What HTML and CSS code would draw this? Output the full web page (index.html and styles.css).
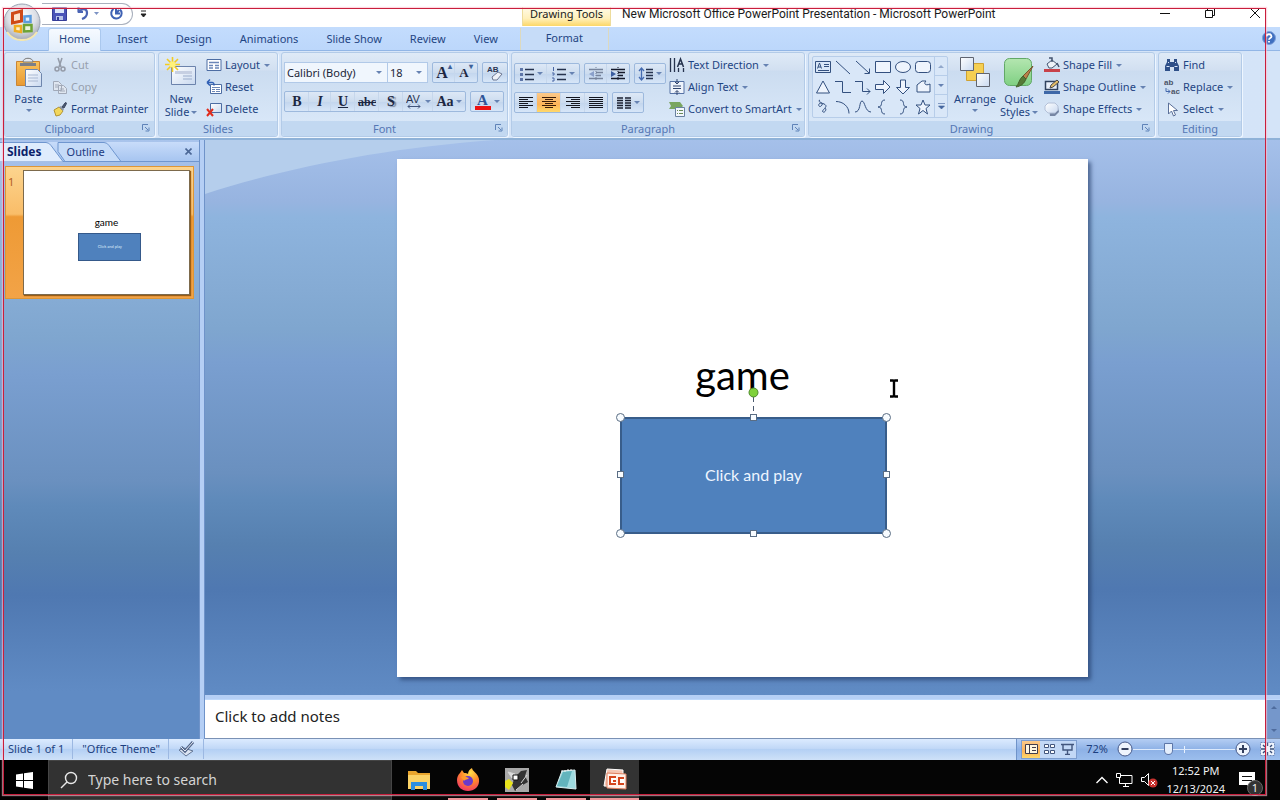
FILE: index.html
```html
<!DOCTYPE html>
<html lang="en">
<head>
<meta charset="utf-8">
<title>New Microsoft Office PowerPoint Presentation - Microsoft PowerPoint</title>
<link rel="stylesheet" href="styles.css">
</head>
<body>
<svg class="defs" aria-hidden="true">
  <defs>
    <linearGradient id="gPaper" x1="0" y1="0" x2="1" y2="1"><stop offset="0" stop-color="#fff"/><stop offset="1" stop-color="#c9d9f0"/></linearGradient>
    <linearGradient id="gClip" x1="0" y1="0" x2="0" y2="1"><stop offset="0" stop-color="#f9c25c"/><stop offset="1" stop-color="#e99a33"/></linearGradient>
    <linearGradient id="gGreen" x1="0" y1="0" x2="0" y2="1"><stop offset="0" stop-color="#b4e6b0"/><stop offset="1" stop-color="#7fd083"/></linearGradient>
    <radialGradient id="gOrb" cx=".5" cy=".35" r=".65"><stop offset="0" stop-color="#fff"/><stop offset=".6" stop-color="#dcdfe6"/><stop offset="1" stop-color="#a4a9b4"/></radialGradient>
    <radialGradient id="gFox" cx=".6" cy=".2" r=".9"><stop offset="0" stop-color="#ffe04a"/><stop offset=".45" stop-color="#ff8a2a"/><stop offset="1" stop-color="#ee2a6e"/></radialGradient>
    <symbol id="launch" viewBox="0 0 8 8"><path d="M.5 6V.5H6M3 3l3 3M7 3.500V7H3.500" fill="none" stroke="#5f83b8"/></symbol>
  </defs>
</svg>
<div class="desktop">
  <header class="titlebar">
    <button class="orb" aria-label="Office Button">
      <svg width="38" height="38" viewBox="0 0 38 38"><circle cx="19" cy="19" r="18" fill="url(#gOrb)" stroke="#9aa3b3"/><path d="M4 29a18 18 0 0 0 30 0" fill="none" stroke="#f4e7b0" stroke-width="2"/><path d="M9.500 10.500l9-2.500v10l-9 2z" fill="#fbe3cf" stroke="#cf4a17" stroke-width="3"/><path d="M21.500 13.500l6-.5v6h-6z" fill="#e6f0fb" stroke="#5b9bdd" stroke-width="2.500"/><path d="M12 23h6v6l-6-1z" fill="#fdf2cf" stroke="#f0ac21" stroke-width="2.500"/><path d="M21 22h7.500v6l-7.500.5z" fill="#eaf4dc" stroke="#6da335" stroke-width="2.500"/></svg>
    </button>
    <div class="qat">
      <button aria-label="Save"><svg width="15" height="15" viewBox="0 0 15 15"><path d="M.5 1.500h14v13h-14z" fill="#4a54b8" stroke="#343c98"/><path d="M3 2h9v5H3z" fill="#dbe6fa"/><path d="M4 10h7v4H4z" fill="#b9c4e8"/><path d="M5 11h2v3H5z" fill="#343c98"/></svg></button>
      <button aria-label="Undo"><svg width="22" height="15" viewBox="0 0 22 15"><path d="M1 6h5M1.500 6.500V1M2 6c3-4 8-4 8 1 0 3-2 5-5 6" fill="none" stroke="#4a64b4" stroke-width="2.200"/><path d="M17 6h5l-2.500 3z" fill="#7d93c4"/></svg></button>
      <button aria-label="Repeat"><svg width="15" height="15" viewBox="0 0 15 15"><path d="M4.500 3A5.200 5.200 0 1 0 11 3.500M7 8V2M6 7.500h5M7 7.500l3-3.500" fill="none" stroke="#3f62b4" stroke-width="2"/></svg></button>
    </div>
    <button class="qat-more" aria-label="Customize Quick Access Toolbar"><svg width="7" height="8" viewBox="0 0 7 8"><path d="M1 1h5M1 4h5L3.500 7z" fill="#222" stroke="#222"/></svg></button>
    <div class="context-title">Drawing Tools</div>
    <h1 class="title">New Microsoft Office PowerPoint Presentation - Microsoft PowerPoint</h1>
    <div class="window-buttons">
      <button aria-label="Minimize"><svg width="12" height="12" viewBox="0 0 12 12"><path d="M1 6.500h10" stroke="#111"/></svg></button>
      <button aria-label="Restore"><svg width="12" height="12" viewBox="0 0 12 12"><path d="M1.500 3.500h7v7h-7zM3.500 3V1.500h7v7H9" fill="none" stroke="#111"/></svg></button>
      <button aria-label="Close"><svg width="12" height="12" viewBox="0 0 12 12"><path d="M1 1l10 10M11 1L1 11" stroke="#111"/></svg></button>
    </div>
  </header>

  <nav class="tabs">
    <button class="tab tab-on">Home</button>
    <button class="tab">Insert</button>
    <button class="tab">Design</button>
    <button class="tab">Animations</button>
    <button class="tab">Slide Show</button>
    <button class="tab">Review</button>
    <button class="tab">View</button>
    <button class="tab tab-context">Format</button>
    <button class="help" aria-label="Help"><svg width="14" height="14" viewBox="0 0 14 14"><circle cx="7" cy="7" r="6.500" fill="#3f6fc0" stroke="#7d9fd8"/><path d="M4.500 5.500c0-3 5-3 5 0 0 1.500-2.500 1.500-2.500 3.200M7 10v1.500" fill="none" stroke="#fff" stroke-width="1.800"/></svg></button>
  </nav>

  <section class="ribbon">
    <div class="group g-clipboard">
      <div class="group-body">
        <button class="big"><svg width="28" height="31" viewBox="0 0 28 31"><path d="M1.500 4.500h23v24h-23z" fill="url(#gClip)" stroke="#c98535"/><path d="M5 6h16v3H5z" fill="#7b7f88"/><path d="M8 5c0-5 10-5 10 0z" fill="#e6e9ee" stroke="#777"/><path d="M10.500 12.500h12l4 4v13h-16z" fill="url(#gPaper)" stroke="#6e86ad"/><path d="M13 18h10M13 21h10M13 24h10" stroke="#a9b8d2"/></svg><span>Paste</span><i class="caret"></i></button>
        <div class="stack">
          <button class="small dim"><svg width="16" height="16" viewBox="0 0 16 16"><path d="M6 1l3 9M10 1L7 10" stroke="#949ba8" stroke-width="1.500"/><circle cx="5" cy="12" r="2" fill="none" stroke="#949ba8" stroke-width="1.500"/><circle cx="11" cy="12" r="2" fill="none" stroke="#949ba8" stroke-width="1.500"/></svg>Cut</button>
          <button class="small dim"><svg width="16" height="16" viewBox="0 0 16 16"><path d="M1.500 2.500h5l3 3v6h-8zM6.500 6.500h5l3 3v5h-8z" fill="#dfe6f0" stroke="#a1a9b8"/><path d="M3 6h4M3 8h3M8 10h4M8 12h5" stroke="#a1a9b8"/></svg>Copy</button>
          <button class="small"><svg width="16" height="16" viewBox="0 0 16 16"><path d="M2 9l5-3 4 4-3 4-4 1z" fill="#f2d75c" stroke="#b39432"/><path d="M7 6l2-1 3 3-1 2z" fill="#8f98aa"/><path d="M10 6l3-4 1-.5.500 1L12 7z" fill="#4a5874" stroke="#38445c"/></svg>Format Painter</button>
        </div>
      </div>
      <footer class="with-launcher">Clipboard<button class="launcher" aria-label="Clipboard options"><svg width="8" height="8"><use href="#launch"/></svg></button></footer>
    </div>

    <div class="group g-slides">
      <div class="group-body">
        <button class="big"><svg width="32" height="31" viewBox="0 0 32 31"><path d="M6.500 9.500h24v18h-24z" fill="url(#gPaper)" stroke="#6c83ac"/><path d="M10 14h17v3H10z" fill="#c6cfe2"/><path d="M18 19h9M18 22h9" stroke="#9aaccb"/><path d="M7.500 0v15M0 7.500h15M2 2l11 11M13 2L2 13" stroke="#f3cc22" stroke-width="1.600"/><circle cx="7.500" cy="7.500" r="3" fill="#fff27a"/></svg><span>New</span><span>Slide<i class="caret"></i></span></button>
        <div class="stack">
          <button class="small"><svg width="16" height="16" viewBox="0 0 16 16"><path d="M1 2.500h14v11H1z" fill="#fff" stroke="#4d6da3"/><path d="M3 5.500h10M3 8.500h4M9 8.500h4M3 11h4M9 11h4" stroke="#6b86b7" stroke-width="1.500"/></svg>Layout<i class="caret"></i></button>
          <button class="small"><svg width="16" height="16" viewBox="0 0 16 16"><path d="M4.500 5.500h11v9h-11z" fill="#fff" stroke="#4d6da3"/><path d="M6 8.500h8M6 10.500h3M10 10.500h4M6 12.500h3M10 12.500h4" stroke="#6b86b7"/><path d="M1 3.500h5c2 0 2 1 2 3M1 3.500l3-3M1 3.500l3 3" fill="none" stroke="#2f5fb5" stroke-width="1.500"/></svg>Reset</button>
          <button class="small"><svg width="16" height="16" viewBox="0 0 16 16"><path d="M4.500 2.500h11v9h-11z" fill="url(#gPaper)" stroke="#4d6da3"/><path d="M1 8l6 7M7 8l-6 7" stroke="#e02c1c" stroke-width="2"/></svg>Delete</button>
        </div>
      </div>
      <footer>Slides</footer>
    </div>

    <div class="group g-font">
      <div class="group-body rows">
        <div class="row">
          <div class="combos">
            <label class="combo combo-font"><select aria-label="Font"><option>Calibri (Body)</option></select><i class="caret"></i></label>
            <label class="combo combo-size"><select aria-label="Font Size"><option>18</option></select><i class="caret"></i></label>
          </div>
          <div class="cluster"><button class="w22 serif big-a" aria-label="Grow Font">A<sup>▴</sup></button><button class="w22 serif small-a" aria-label="Shrink Font">A<sup>▾</sup></button></div>
          <div class="cluster"><button class="w24" aria-label="Clear Formatting"><svg width="18" height="18" viewBox="0 0 18 18"><text x="1" y="8" class="tiny">AB</text><path d="M6 13l6-5 4 2-5 6H7z" fill="#eef1f8" stroke="#6d7893"/></svg></button></div>
        </div>
        <div class="row">
          <div class="cluster">
            <button class="w24 serif"><b>B</b></button><button class="w22 serif"><b><em>I</em></b></button><button class="w24 serif"><b><u>U</u></b></button><button class="w24 serif abc"><b><s>abc</s></b></button><button class="w24 serif shade"><b>S</b></button><button class="w30 serif av" aria-label="Character Spacing"><svg width="17" height="17" viewBox="0 0 17 17"><text x="0" y="10" class="avtext">AV</text><path d="M2 13.500h12M4 11.500l-2 2 2 2M12 11.500l2 2-2 2" fill="none" stroke="#41547b"/></svg><i class="caret"></i></button><button class="w34 serif aa"><b>Aa</b><i class="caret"></i></button>
          </div>
          <div class="cluster"><button class="w32" aria-label="Font Color"><svg width="18" height="18" viewBox="0 0 18 18"><text x="3" y="12" class="colortext">A</text><path d="M1 13h16v4H1z" fill="#ec1212"/></svg><i class="caret"></i></button></div>
        </div>
      </div>
      <footer class="with-launcher">Font<button class="launcher" aria-label="Font options"><svg width="8" height="8"><use href="#launch"/></svg></button></footer>
    </div>

    <div class="group g-paragraph">
      <div class="group-body">
        <div class="rows">
          <div class="row">
            <div class="cluster">
              <button class="w34" aria-label="Bullets"><svg width="16" height="16" viewBox="0 0 16 16"><path d="M1 2h3v3H1zM1 7h3v3H1zM1 12h3v3H1z" fill="#5e76a8"/><path d="M6 3.500h9M6 8.500h9M6 13.500h9" stroke="#26334e" stroke-width="1.400"/></svg><i class="caret"></i></button>
              <button class="w32" aria-label="Numbering"><svg width="16" height="16" viewBox="0 0 16 16"><path d="M2.500 1v4M1 7h2v2H1.500M1 12h2v3H1" fill="none" stroke="#4a66a4"/><path d="M6 3.500h9M6 8.500h9M6 13.500h9" stroke="#26334e" stroke-width="1.400"/></svg><i class="caret"></i></button>
            </div>
            <div class="cluster">
              <button class="w22" aria-label="Decrease List Level"><svg width="16" height="16" viewBox="0 0 16 16"><path d="M1 3.500h14M8 6.500h7M8 9.500h5M1 12.500h14" stroke="#76839b" stroke-width="1.300"/><path d="M8 1v14" stroke="#76839b" stroke-dasharray="1 1"/><path d="M6 5v6L1 8z" fill="#8aa0ca"/></svg></button>
              <button class="w22" aria-label="Increase List Level"><svg width="16" height="16" viewBox="0 0 16 16"><path d="M1 3.500h14M8 6.500h7M8 9.500h5M1 12.500h14" stroke="#15192a" stroke-width="1.600"/><path d="M8 1v14" stroke="#15192a" stroke-dasharray="1 1"/><path d="M1 5v6l5-3z" fill="#3c5ea0"/></svg></button>
            </div>
            <div class="cluster"><button class="w30" aria-label="Line Spacing"><svg width="16" height="16" viewBox="0 0 16 16"><path d="M3.500 2v12M1 5l2.500-3L6 5M1 11l2.500 3L6 11" fill="none" stroke="#456bb0" stroke-width="1.300"/><path d="M8 3.500h7M8 6.500h7M8 9.500h7M8 12.500h7" stroke="#26334e" stroke-width="1.300"/></svg><i class="caret"></i></button></div>
          </div>
          <div class="row">
            <div class="cluster">
              <button class="w22" aria-label="Align Left"><svg width="16" height="14" viewBox="0 0 16 14"><path d="M1 1.500h14M1 3.500h9M1 5.500h14M1 7.500h9M1 9.500h14M1 11.500h9" stroke="#14161f"/></svg></button>
              <button class="w24 on" aria-label="Center"><svg width="16" height="14" viewBox="0 0 16 14"><path d="M1 1.500h14M4 3.500h8M1 5.500h14M4 7.500h8M1 9.500h14M4 11.500h8" stroke="#3a1c08"/></svg></button>
              <button class="w24" aria-label="Align Right"><svg width="16" height="14" viewBox="0 0 16 14"><path d="M1 1.500h14M6 3.500h9M1 5.500h14M6 7.500h9M1 9.500h14M6 11.500h9" stroke="#14161f"/></svg></button>
              <button class="w22" aria-label="Justify"><svg width="16" height="14" viewBox="0 0 16 14"><path d="M1 1.500h14M1 3.500h14M1 5.500h14M1 7.500h14M1 9.500h14M1 11.500h14" stroke="#14161f"/></svg></button>
            </div>
            <div class="cluster"><button class="w30" aria-label="Columns"><svg width="16" height="14" viewBox="0 0 16 14"><path d="M1 2h6M1 4.500h6M1 7h6M1 9.500h6M1 12h6M9 2h6M9 4.500h6M9 7h6M9 9.500h6M9 12h6" stroke="#1c2233" stroke-width="1.300"/></svg><i class="caret"></i></button></div>
          </div>
        </div>
        <div class="stack">
          <button class="small"><svg width="16" height="16" viewBox="0 0 16 16"><path d="M1.500 1v14M5.500 1v14M9.500 15v-4M14.500 15v-4" stroke="#26334e" stroke-width="1.300"/><path d="M8.500 10l3-8 3 8M10 7h4" fill="none" stroke="#26334e" stroke-width="1.500"/></svg>Text Direction<i class="caret"></i></button>
          <button class="small"><svg width="16" height="16" viewBox="0 0 16 16"><path d="M1 2.500h14v12H1z" fill="#eff4fc" stroke="#5672a5"/><path d="M4 7h8M4 9.500h8M8 0v5M8 16v-4" stroke="#31456e"/><path d="M6 3l2 2 2-2M6 13.500l2-2 2 2" fill="none" stroke="#31456e"/></svg>Align Text<i class="caret"></i></button>
          <button class="small"><svg width="16" height="16" viewBox="0 0 16 16"><path d="M0 1h11l3 4-3 3H0l2-3z" fill="#79a560"/><path d="M6.500 6.500h9v9h-9z" fill="#f2f6fc" stroke="#69819f"/><path d="M8 9.500h1M10 9.500h4M8 12.500h1M10 12.500h4" stroke="#6a8b57"/></svg>Convert to SmartArt<i class="caret"></i></button>
        </div>
      </div>
      <footer class="with-launcher">Paragraph<button class="launcher" aria-label="Paragraph options"><svg width="8" height="8"><use href="#launch"/></svg></button></footer>
    </div>

    <div class="group g-drawing">
      <div class="group-body">
        <div class="gallery">
          <div class="shapes">
            <button aria-label="Text Box"><svg width="16" height="16" viewBox="0 0 16 16"><path d="M.5 2.500h15v11H.5z"/><path d="M2.500 9.500L4.500 4l2 5.500M3 8h3M9 5.500h5M9 7.500h5M3 11.500h11"/></svg></button>
            <button aria-label="Line"><svg width="16" height="16" viewBox="0 0 16 16"><path d="M1 2l14 13"/></svg></button>
            <button aria-label="Arrow"><svg width="16" height="16" viewBox="0 0 16 16"><path d="M1 2l13 12M14.500 9.500v5h-5"/></svg></button>
            <button aria-label="Rectangle"><svg width="16" height="16" viewBox="0 0 16 16"><path class="f" d="M.5 2.500h15v11H.5z"/></svg></button>
            <button aria-label="Oval"><svg width="16" height="16" viewBox="0 0 16 16"><ellipse class="f" cx="8" cy="8" rx="7.500" ry="5.500"/></svg></button>
            <button aria-label="Rounded Rectangle"><svg width="16" height="16" viewBox="0 0 16 16"><rect class="f" x=".5" y="2.500" width="15" height="11" rx="3"/></svg></button>
            <button aria-label="Triangle"><svg width="16" height="16" viewBox="0 0 16 16"><path class="f" d="M8 2l6.500 12h-13z"/></svg></button>
            <button aria-label="Elbow Connector"><svg width="16" height="16" viewBox="0 0 16 16"><path d="M0 2.500h7.500v11H16"/></svg></button>
            <button aria-label="Elbow Arrow Connector"><svg width="16" height="16" viewBox="0 0 16 16"><path d="M0 2.500h7.500v10H15M12 9.500l3 3-3 3"/></svg></button>
            <button aria-label="Right Arrow"><svg width="16" height="16" viewBox="0 0 16 16"><path class="f" d="M.5 5.500h8v-4L15 8l-6.500 6.500v-4h-8z"/></svg></button>
            <button aria-label="Down Arrow"><svg width="16" height="16" viewBox="0 0 16 16"><path class="f" d="M5.500 1v7.500h-4L8 15l6.500-6.500h-4V1z"/></svg></button>
            <button aria-label="Freeform"><svg width="16" height="16" viewBox="0 0 16 16"><path class="f" d="M2 13V6l5-4h4c-3 3 0 5 4 3v8z"/></svg></button>
            <button aria-label="Scribble"><svg width="16" height="16" viewBox="0 0 16 16"><path d="M5 1c-4 2 4 2 2 5s-4 1-3-1 7 0 7 2-5 5-3 6 4-3 2-4"/></svg></button>
            <button aria-label="Arc"><svg width="16" height="16" viewBox="0 0 16 16"><path d="M1 2.500c7 0 13 5 13 12"/></svg></button>
            <button aria-label="Curve"><svg width="16" height="16" viewBox="0 0 16 16"><path d="M0 13C6 13 4 2 7 2s3 11 9 11"/></svg></button>
            <button aria-label="Left Brace"><svg width="16" height="16" viewBox="0 0 16 16"><path d="M10 1C4 1 9 8 3 8c6 0 1 7 7 7"/></svg></button>
            <button aria-label="Right Brace"><svg width="16" height="16" viewBox="0 0 16 16"><path d="M5 1c6 0 1 7 7 7-6 0-1 7-7 7"/></svg></button>
            <button aria-label="Star"><svg width="16" height="16" viewBox="0 0 16 16"><path class="f" d="M8 1l2 5h5l-4 3.500L12.500 15 8 11.500 3.500 15 5 9.500 1 6h5z"/></svg></button>
          </div>
          <div class="scroller"><button aria-label="Previous shapes"><i class="caret up"></i></button><button aria-label="Next shapes"><i class="caret"></i></button><button aria-label="More shapes"><svg width="7" height="7" viewBox="0 0 7 7"><path d="M0 .5h7M.5 3h6l-3 3z" fill="#45669f" stroke="#45669f" stroke-width=".6"/></svg></button></div>
        </div>
        <button class="big"><svg width="30" height="31" viewBox="0 0 30 31"><path d="M6.500 6.500h17v17h-17z" fill="#f5cf52" stroke="#d0a232"/><path d="M.5.500h13v13H.5z" fill="url(#gPaper)" stroke="#5f6470"/><path d="M16.500 16.500h13v13h-13z" fill="url(#gPaper)" stroke="#5f6470"/></svg><span>Arrange</span><i class="caret"></i></button>
        <button class="big"><svg width="32" height="31" viewBox="0 0 32 31"><rect x="1.500" y="1.500" width="27" height="27" rx="5" fill="url(#gGreen)" stroke="#62a867"/><path d="M30 9L20 19l3 3z" fill="#b9834a" stroke="#78532c"/><path d="M20 19l3 3c-2 5-5 7-10 8 3-3 3-8 7-11z" fill="#557a37" stroke="#41612a"/></svg><span>Quick</span><span>Styles<i class="caret"></i></span></button>
        <div class="stack">
          <button class="small"><svg width="16" height="16" viewBox="0 0 16 16"><path d="M3 7l5-4 5 4-5 4H5z" fill="#eef2f8" stroke="#44546f"/><path d="M8 5V1H5M13 6l2 4" fill="none" stroke="#44546f" stroke-width="1.500"/><path d="M0 12h16v3H0z" fill="#c8424a"/></svg>Shape Fill<i class="caret"></i></button>
          <button class="small"><svg width="16" height="16" viewBox="0 0 16 16"><path d="M1.500 2.500h12v8h-12z" fill="#eaf0fa" stroke="#31435f" stroke-width="1.500"/><path d="M6 9l1-3 6-5 2 2-6 5z" fill="#e4bd68" stroke="#4c4c4c"/><path d="M0 12h16v3H0z" fill="#3e68a8"/></svg>Shape Outline<i class="caret"></i></button>
          <button class="small"><svg width="16" height="16" viewBox="0 0 16 16"><path d="M5 6h9l1 5-4 4H6z" fill="#7686a4"/><path d="M4 2h7l3 3v4l-3 3H4L1 9V5z" fill="url(#gPaper)" stroke="#b4c1d8"/></svg>Shape Effects<i class="caret"></i></button>
        </div>
      </div>
      <footer class="with-launcher">Drawing<button class="launcher" aria-label="Drawing options"><svg width="8" height="8"><use href="#launch"/></svg></button></footer>
    </div>

    <div class="group g-editing">
      <div class="group-body">
        <div class="stack">
          <button class="small"><svg width="16" height="16" viewBox="0 0 16 16"><path d="M3 2h3v3h4V2h3v3l2 4v5h-5v-4H6v4H1V9l2-4z" fill="#2e4f88"/><path d="M2.500 9.500h3M10.500 9.500h3M4 5.500h1M11 5.500h1" stroke="#dbe6f8"/></svg>Find</button>
          <button class="small"><svg width="16" height="16" viewBox="0 0 16 16"><text x="0" y="6" class="abtext">ab</text><text x="7" y="15" class="abtext">ac</text><path d="M2 9v3.500h4M4 10.500l2 2-2 2" fill="none" stroke="#4468ac"/></svg>Replace<i class="caret"></i></button>
          <button class="small"><svg width="16" height="16" viewBox="0 0 16 16"><path d="M4.500 2v11l3-3 2 5 2-1-2-4.500h4z" fill="#fff" stroke="#5b7099"/></svg>Select<i class="caret"></i></button>
        </div>
      </div>
      <footer>Editing</footer>
    </div>
  </section>

  <main class="work">
    <aside class="outline-pane">
      <div class="pane-tabs">
        <svg class="pane-tab-shape" width="124" height="20" viewBox="0 0 124 20" aria-hidden="true"><path d="M58 .5h46q3 0 5 3l12 16H65l-7-10z" fill="#c5dbf8" stroke="#6f96cf"/><path d="M0 .5h46q3 0 5 3l12 16H0z" fill="#dfecfd"/><path d="M0 .5h46q3 0 5 3l12 16" fill="none" stroke="#6f96cf"/></svg>
        <button class="pane-tab pane-on">Slides</button>
        <button class="pane-tab">Outline</button>
        <button class="pane-close" aria-label="Close pane"><svg width="7" height="7" viewBox="0 0 7 7"><path d="M.5.500l6 6M6.500.500l-6 6" stroke="#4b6796" stroke-width="1.600"/></svg></button>
      </div>
      <button class="thumb-row">
        <span class="thumb-no">1</span>
        <span class="thumb"><span class="thumb-title">game</span><span class="thumb-box">Click and play</span></span>
      </button>
    </aside>
    <div class="splitter"></div>
    <div class="editor">
      <div class="canvas">
        <svg class="swoosh" viewBox="0 0 290 56" width="290" height="56" aria-hidden="true"><path d="M0 0h290C180 8 80 28 0 54z" fill="#b5ceec"/></svg>
        <div class="slide">
          <div class="slide-title">game</div>
          <div class="shape">Click and play
            <svg class="rotate" width="11" height="30" viewBox="0 0 11 30"><path d="M5.500 10v18" stroke="#4b5a6e" stroke-dasharray="5 4"/><circle cx="5.500" cy="5.500" r="4.500" fill="#7fd13b" stroke="#4d8a2c"/></svg>
            <i class="h c nw"></i><i class="h q n"></i><i class="h c ne"></i><i class="h q w"></i><i class="h q e"></i><i class="h c sw"></i><i class="h q s"></i><i class="h c se"></i>
          </div>
          <svg class="cursor" width="10" height="19" viewBox="0 0 10 19"><path d="M1 1.500h3l1 1 1-1h3M1 17.500h3l1-1 1 1h3M5 2v15" fill="none" stroke="#000" stroke-width="2.400"/></svg>
        </div>
      </div>
      <div class="notes-wrap">
        <textarea class="notes" aria-label="Notes" placeholder="Click to add notes"></textarea>
        <div class="notes-scroll"><i class="caret up"></i><i class="caret"></i></div>
      </div>
    </div>
  </main>

  <footer class="status">
    <span class="status-cell">Slide 1 of 1</span>
    <span class="status-cell">"Office Theme"</span>
    <button class="status-cell" aria-label="Spelling"><svg width="17" height="16" viewBox="0 0 17 16"><path d="M1 9l5-2 9 3-7 5z" fill="#dbe4f2" stroke="#647796"/><path d="M3 6l4 4 8-9" fill="none" stroke="#4f6286" stroke-width="3"/><path d="M3 6l4 4 8-9" fill="none" stroke="#e7edf8"/></svg></button>
    <div class="status-right">
      <div class="views">
        <button class="on" aria-label="Normal"><svg width="13" height="12" viewBox="0 0 13 12"><path d="M.5 1.500h12v9H.5z" fill="#fff6df"/><path d="M.5 1.500h12v9H.5zM4.500 1.500v9M7 4.500h4M7 7.500h4" fill="none" stroke="#413c4c"/></svg></button>
        <button aria-label="Slide Sorter"><svg width="13" height="12" viewBox="0 0 13 12"><path d="M1.500 1.500h4v3h-4zM7.500 1.500h4v3h-4zM1.500 7.500h4v3h-4zM7.500 7.500h4v3h-4z" fill="#fff" stroke="#42557d"/></svg></button>
        <button aria-label="Slide Show"><svg width="13" height="12" viewBox="0 0 13 12"><path d="M0 1.500h13M2 2v5h9V2M6.500 7v4M4 11.500h5" fill="none" stroke="#42557d" stroke-width="1.400"/></svg></button>
      </div>
      <span class="percent">72%</span>
      <button class="round" aria-label="Zoom Out"><svg width="16" height="16" viewBox="0 0 16 16"><circle cx="8" cy="8" r="7" fill="#eef4fd" stroke="#46598a"/><path d="M4.500 8h7" stroke="#333f5e" stroke-width="2"/></svg></button>
      <input class="zoom" type="range" min="0" max="100" value="33" aria-label="Zoom">
      <button class="round" aria-label="Zoom In"><svg width="16" height="16" viewBox="0 0 16 16"><circle cx="8" cy="8" r="7" fill="#eef4fd" stroke="#46598a"/><path d="M4 8h8M8 4v8" stroke="#333f5e" stroke-width="2"/></svg></button>
      <button class="round fit" aria-label="Fit to window"><svg width="15" height="14" viewBox="0 0 15 14"><path d="M.5.500h14v13H.5z" fill="#eef4fd" stroke="#6e8abb" stroke-dasharray="2 1"/><path d="M7.500 1v3M7.500 10v3M1 7h4M10 7h4M3 3l2 2M12 3l-2 2M3 11l2-2M12 11l-2-2" stroke="#364c78" stroke-width="1.400"/></svg></button>
    </div>
  </footer>

  <footer class="taskbar">
    <button class="start" aria-label="Start"><svg width="17" height="17" viewBox="0 0 17 17"><path d="M0 2.500L7 1.500V8H0zM8 1.300L17 0v8H8zM0 9h7v6.500l-7-1zM8 9h9v8l-9-1.300z" fill="#fff"/></svg></button>
    <label class="search"><svg width="18" height="18" viewBox="0 0 18 18"><circle cx="11" cy="7" r="5.500" fill="none" stroke="#e8e8e8" stroke-width="1.400"/><path d="M7 11l-6 6" stroke="#e8e8e8" stroke-width="1.400"/></svg><input type="text" aria-label="Search" placeholder="Type here to search"></label>
    <div class="apps">
      <button class="app" aria-label="File Explorer"><svg width="24" height="24" viewBox="0 0 24 24"><path d="M1 3h8l2 2h12v5H1z" fill="#e9a52d"/><path d="M1 7h22v14H1z" fill="#fbd266"/><path d="M4 22v-8h16v8h-4v-4H8v4z" fill="#2c8ee0"/></svg></button>
      <button class="app run" aria-label="Firefox"><svg width="24" height="24" viewBox="0 0 24 24"><path d="M4 5l2-3 2 3c2 0 3 0 4 1 0-3 2-5 4-6 0 3 6 5 7 11 1 8-5 12-11 12S1 19 1 12c0-3 1-5 3-7z" fill="url(#gFox)"/><circle cx="12" cy="13" r="5" fill="#6a39c9"/><path d="M5 9c3-2 5 0 8 1-1 2-4 1-5 3" fill="#ff9a2a"/></svg></button>
      <button class="app run" aria-label="Media tool"><svg width="24" height="24" viewBox="0 0 24 24"><path d="M0 0h24v24H0z" fill="#a9a9a9"/><path d="M10 9l6-6 6-1-2 6 3 6-7 4-6 5-3-6z" fill="#333"/><path d="M3 4l7 2-3 4zM16 15l6-8M11 22l7-6" fill="#ddd" stroke="#d8d8d8"/><path d="M0 13l4-2 4 4-4 7-4-3z" fill="#e9e41c"/><path d="M8 7h5v5H8z" fill="#fff" stroke="#111"/></svg></button>
      <button class="app run" aria-label="Notepad"><svg width="24" height="24" viewBox="0 0 24 24"><path d="M8 3l13-1 1 19-20-2z" fill="#9fdbe0" stroke="#d9eef0"/><path d="M9 4l9-1-5 16-10-1z" fill="#63b4bd"/><path d="M8 2v2M11 2v2M14 1v2M17 1v2" stroke="#eee"/></svg></button>
      <button class="app run app-on" aria-label="PowerPoint"><svg width="24" height="24" viewBox="0 0 24 24"><path d="M4 1l16 1v17L1 18z" fill="#f5c6b4" stroke="#fff"/><path d="M4 5l19 1v15L4 20z" fill="#fff1ea" stroke="#e08060"/><path d="M6 8h7v9H6zM15 9h6v8h-6z" fill="#d4451d"/><path d="M8 10h5v5H8zM17 11h4v4h-4z" fill="#fff"/><path d="M10 12h3v2h-3z" fill="#d4451d"/></svg></button>
    </div>
    <div class="tray">
      <button aria-label="Show hidden icons"><svg width="12" height="8" viewBox="0 0 12 8"><path d="M.5 7L6 1.500 11.500 7" fill="none" stroke="#fff" stroke-width="1.400"/></svg></button>
      <button aria-label="Network"><svg width="17" height="15" viewBox="0 0 17 15"><path d="M3.500 6V3M5 2.500h11v8H3.500V6M7 13.500h6M9.500 11v2" fill="none" stroke="#fff"/><path d="M.5.500h4v4h-4z" fill="#000" stroke="#fff"/></svg></button>
      <button aria-label="Volume muted"><svg width="17" height="16" viewBox="0 0 17 16"><path d="M.5 5.500h3l4-4v12l-4-4h-3z" fill="none" stroke="#fff"/><circle cx="12" cy="11" r="4.500" fill="#c8322f"/><path d="M10 9l4 4M14 9l-4 4" stroke="#fff"/></svg></button>
      <button class="clock"><span>12:52 PM</span><span>12/13/2024</span></button>
      <button class="notice" aria-label="Notifications"><svg width="16" height="17" viewBox="0 0 16 17"><path d="M0 0h16v13h-4v4l-4-4H0z" fill="#fff"/><path d="M3 4.500h10M3 8.500h10" stroke="#111"/></svg><span class="badge">1</span></button>
    </div>
  </footer>
  <div class="frame"></div>
</div>
</body>
</html>
```
FILE: styles.css
```css
* { box-sizing: border-box; }
body { margin: 0; font-family: "Noto Sans", "Open Sans", sans-serif; font-size: 11px; line-height: 16px; color: #1f4583; }
button { margin: 0; padding: 0; border: 0; background: none; font: inherit; color: inherit; }
svg { display: block; flex: none; }
.defs { position: absolute; width: 0; height: 0; }
.desktop { position: relative; display: flex; flex-direction: column; height: 100vh; overflow: hidden; background: #bfd9fb; }
.frame { position: absolute; inset: 8px 14px 5px 3px; z-index: 5; border: 1px solid #c81e3c; box-shadow: 0 0 1px 1px rgba(255, 190, 205, .6); pointer-events: none; }

.caret { display: inline-block; flex: none; width: 0; height: 0; margin-left: 4px; border: 3px solid transparent; border-top-color: #6682b2; border-bottom-width: 0; vertical-align: 2px; }
.caret.up { border-top-width: 0; border-bottom: 3px solid #93a9cc; }

/* title bar */
.titlebar { position: relative; display: flex; align-items: center; height: 27px; flex: none; padding-left: 42px; background: #fff; color: #1b1b1b; }
.orb { position: absolute; left: 3px; top: 3px; z-index: 2; }
.qat { display: flex; align-items: center; gap: 10px; width: 91px; height: 22px; padding-left: 10px; border: 1px solid #a9b0bd; border-left: 0; border-radius: 0 11px 11px 0; }
.qat-more { margin-left: 7px; width: 7px; }
.context-title { display: flex; align-items: flex-end; justify-content: center; width: 89px; height: 19px; margin: 6px 0 0 375px; padding-bottom: 4px; background: linear-gradient(#fffbe9, #fff0bb 60%, #fcd768); border: solid #eddc9c; border-width: 0 1px; white-space: nowrap; }
.title { margin: 0 0 0 11px; font: 400 12px/16px Roboto, "Noto Sans", sans-serif; white-space: nowrap; }
.window-buttons { display: flex; gap: 33px; margin: 0 19px 2px auto; }

/* ribbon tabs */
.tabs { display: flex; align-items: stretch; height: 24px; flex: none; padding: 1px 4px 0 46px; background: linear-gradient(#c3dcfd, #bcd7fb); border-bottom: 1px solid #92b6e6; }
.tab { margin: 0 2px; padding: 0 11px 2px; white-space: nowrap; border: 1px solid transparent; border-bottom: 0; }
.tab-on { margin-bottom: -1px; padding: 0 10px 2px; background: linear-gradient(#f6faff, #e3eefb); border-color: #aac8ee; border-radius: 3px 3px 0 0; }
.tab-context { width: 89px; margin-left: 8px; border-color: #dcd9bf; border-top: 0; background: #c6dcf8; }
.help { margin: 3px 0 0 auto; align-self: flex-start; }

/* ribbon */
.ribbon { display: flex; gap: 3px; height: 89px; flex: none; padding: 1px 4px; background: linear-gradient(90deg, #d8e6f8, #d4e4f8); border-bottom: 2px solid #8fb2d8; }
.group { display: flex; flex-direction: column; flex: none; border: 1px solid #b3cbe8; border-radius: 3px; background: linear-gradient(#dfeaf7, #d2e0f1 20%, #cbdcf0 22%, #dceafa); box-shadow: 1px 1px 0 #eef6ff; }
.group-body { display: flex; align-items: flex-start; flex: 1; padding-top: 1px; }
.group > footer { position: relative; height: 15px; text-align: center; background: #c2d8f1; color: #5577b4; border-radius: 0 0 2px 2px; line-height: 15px; }
.group > .with-launcher { padding-right: 20px; }
.launcher { position: absolute; right: 4px; top: 3px; }
.g-clipboard { width: 151px; padding-left: 3px; }
.g-clipboard > footer { margin-left: -3px; }
.g-slides { width: 120px; }
.g-font { width: 227px; }
.g-paragraph { width: 294px; }
.g-drawing { width: 347px; }
.g-editing { width: 84px; }
.g-editing .stack { margin-left: 5px; }
.stack { display: grid; grid-template-rows: repeat(3, 22px); margin-left: 3px; }
.small { display: flex; align-items: center; gap: 3px; white-space: nowrap; }
.small .caret { margin-left: 1px; }
.dim { color: #97a0ae; }
.big { display: flex; flex-direction: column; align-items: center; width: 44px; padding-top: 3px; line-height: 13px; }
.big span { white-space: nowrap; }
.big svg + span { margin-top: 4px; }
.big > .caret { margin: 4px 0 0; }
.big span .caret { margin-left: 2px; }
.g-clipboard .big { width: 41px; }

.rows { display: flex; flex-direction: column; gap: 8px; padding: 9px 0 0 2px; }
.row { display: flex; gap: 4px; height: 21px; }
.combos { display: flex; }
.combo { display: flex; align-items: center; padding-right: 5px; background: #f0f6fd; border: 1px solid #b1c9e8; }
.combo + .combo { border-left: 0; }
.combo select { flex: 1; min-width: 0; padding: 0 0 0 2px; appearance: none; border: 0; background: none; font: inherit; color: #1b2537; }
.combo .caret { margin: 0; }
.combo-font { width: 104px; }
.combo-size { width: 40px; }
.cluster { display: flex; border: 1px solid #9db9dd; border-radius: 2px; background: linear-gradient(#dde8f6, #ccdcef 50%, #c2d5ed 51%, #d7e6f8); }
.cluster button { display: flex; align-items: center; justify-content: center; }
.cluster button + button { box-shadow: -1px 0 0 #c6d7ec; }
.cluster .caret { margin-left: 2px; }
.w22 { width: 22px; }
.w24 { width: 24px; }
.w30 { width: 30px; }
.w32 { width: 32px; }
.w34 { width: 32px; }
.on { background: linear-gradient(#fbc98a, #fdb357 60%, #ffd96b); }
.cluster .serif { font-family: "Liberation Serif", serif; font-size: 14px; color: #1d2742; }
.serif sup { font-size: 8px; line-height: 8px; align-self: flex-start; color: #3d6199; }
.cluster .big-a { font-size: 16px; font-weight: 700; }
.cluster .small-a { font-size: 13px; font-weight: 700; }
.cluster .abc { font-size: 12px; }
.shade { text-shadow: 2px 1px 1px #7b869c; }
.tiny { font: 700 8px "Liberation Sans", sans-serif; fill: #2a3553; }
.avtext { font: 11px "Liberation Sans", sans-serif; fill: #2a3553; }
.colortext { font: 700 15px "Liberation Serif", serif; fill: #2f5597; }
.abtext { font: 700 8px "Liberation Sans", sans-serif; fill: #4b5468; }

.gallery { display: flex; margin: 2px 5px 0 3px; border: 1px solid #b7cde9; background: #d9e7f8; border-radius: 2px; }
.shapes { display: grid; grid-template-columns: repeat(6, 20px); grid-template-rows: repeat(3, 20px); }
.shapes button { display: grid; place-items: center; }
.shapes svg { fill: none; stroke: #33507f; }
.shapes .f { fill: #eef4fd; }
.scroller { display: grid; width: 13px; margin-left: 1px; border-left: 1px solid #b7cde9; }
.scroller button { display: grid; place-items: center; border-bottom: 1px solid #b7cde9; }
.scroller button:last-child { border-bottom: 0; }
.scroller .caret { margin: 0; }

/* work area */
.work { display: flex; flex: 1; min-height: 0; }
.outline-pane { display: flex; flex-direction: column; width: 199px; flex: none; padding: 2px 5px 0; background: linear-gradient(#a9c4ec, #97b4e0 13%, #8eb4de 16%, #85abd4 27%, #7fa6cf 33%, #7a9fd0 39%, #6a90bf 57%, #5f8aba 61%, #5680b0 69%, #4f78b1 76%, #608bc4 92%); }
.pane-tabs { position: relative; display: flex; align-items: center; height: 20px; margin: 0 -5px 4px; padding: 0 7px; background: linear-gradient(#c8dcfa, #a7c5f0); border-bottom: 1px solid #6f96cf; color: #1c3a80; }
.pane-tab-shape { position: absolute; left: 0; top: 0; }
.pane-tab { position: relative; }
.pane-on { margin-right: 25px; font-size: 12px; font-weight: 700; color: #0d1f6b; }
.pane-close { margin-left: auto; }
.thumb-row { display: flex; width: 189px; padding: 3px 3px 3px 2px; border: 1px solid #dd9637; background: linear-gradient(#fcd48e, #f9bd68 36%, #ee9a35 38%, #f2a347); text-align: left; }
.thumb-no { width: 15px; padding-top: 4px; line-height: 15px; color: #b45d1e; }
.thumb { position: relative; flex: 1; aspect-ratio: 4 / 3; background: #fff; border: 1px solid #7d6a4c; box-shadow: 1px 1px 1px #9a5d14; color: #000; }
.thumb-title { position: absolute; left: 0; right: 0; top: 36%; text-align: center; font: 10px/14px Lato, sans-serif; }
.thumb-box { position: absolute; left: 33%; top: 50%; width: 38%; height: 23%; display: grid; place-items: center; background: #4f81bd; border: 1px solid #35598a; color: #dfeafa; font: 4px/6px Lato, sans-serif; }
.splitter { width: 6px; flex: none; background: #b5cff5; border: solid #6f93c9; border-width: 0 1px; }
.editor { display: flex; flex-direction: column; flex: 1; min-width: 0; }
.canvas { position: relative; flex: 1; min-height: 0; display: flex; justify-content: center; padding: 19px 0 18px; background: linear-gradient(#a5c0ea, #97b4e0 11%, #8eb4de 14%, #85abd4 27%, #7fa6cf 34%, #7a9fd0 40%, #6a90bf 60%, #5f8aba 65%, #5680b0 73%, #4f78b1 81%, #608bc4); }
.swoosh { position: absolute; left: 0; top: 0; }
.slide { position: relative; height: 100%; aspect-ratio: 4 / 3; background: #fff; box-shadow: 3px 3px 4px rgba(35, 60, 105, .65); color: #000; }
.slide-title { position: absolute; left: 0; right: 0; top: 37%; text-align: center; font: 40px/48px Lato, sans-serif; }
.shape { position: absolute; left: 32.3%; top: 49.8%; width: 38.6%; height: 22.6%; display: grid; place-items: center; background: #4f81bd; border: 2px solid #385d8a; color: #eef5ff; font: 16px/20px Lato, sans-serif; }
.rotate { position: absolute; left: calc(50% - 6px); top: -32px; }
.h { position: absolute; background: #f8fcff; border: 1px solid #5a6d84; }
.c { width: 9px; height: 9px; border-radius: 50%; margin: -5px; }
.q { width: 7px; height: 7px; margin: -4px; }
.nw, .n, .ne { top: -1px; }
.sw, .s, .se { bottom: -1px; }
.w, .e { top: 50%; }
.nw, .w, .sw { left: -1px; }
.ne, .e, .se { right: -1px; }
.n, .s { left: 50%; }
.cursor { position: absolute; left: 71.2%; top: 42.4%; }
.notes-wrap { display: flex; height: 44px; flex: none; padding-top: 1px; border-top: 4px solid #b5cff5; border-bottom: 1px solid #7a91b5; }
.notes { flex: 1; padding: 6px 10px; border: 0; resize: none; font: 15px/20px "Noto Sans", sans-serif; background: #fff; }
.notes::placeholder { color: #222; opacity: 1; }
.notes-scroll { display: flex; flex-direction: column; justify-content: space-between; width: 15px; padding: 6px 3px; background: #7597cb; }
.notes-scroll .caret { margin: 0 0 0 3px; border-top-color: #4f6c9e; border-bottom-color: #4f6c9e; }

/* status bar */
.status { display: flex; align-items: stretch; height: 21px; flex: none; padding: 0 0 1px 8px; background: linear-gradient(#dcebff, #c1d8f7 45%, #b4d0f4 50%, #cee1f8); color: #1c3f80; }
.status-cell { display: flex; align-items: center; margin-right: 9px; padding-right: 8px; border-right: 1px solid #9cb8e2; white-space: nowrap; }
.status-right { display: flex; align-items: center; margin: 0 0 -1px auto; padding: 0 5px 1px 4px; background: linear-gradient(#b4cdf3, #8db1e6 50%, #9cbeed); border-left: 1px solid #6f93c9; }
.views { display: flex; border: 1px solid #7d9dcf; }
.views button { display: grid; place-items: center; width: 18px; height: 17px; background-color: #c3d8f6; }
.views .on { background-color: #fbc462; }
.percent { margin: 0 9px; }
.round { flex: none; }
.fit { margin-left: 9px; }
.zoom { width: 102px; height: 14px; margin: 0; appearance: none; background: linear-gradient(#dce9fc, #dce9fc) center / 100% 1px no-repeat, linear-gradient(#e9f2ff, #e9f2ff) center / 1px 7px no-repeat; }
.zoom::-webkit-slider-thumb { appearance: none; width: 9px; height: 12px; border: 1px solid #5d76a8; border-radius: 1px 1px 5px 5px; background: #e4eefc; }

/* taskbar */
.taskbar { display: flex; height: 40px; flex: none; background: #050505; color: #f2f2f2; }
.start { display: grid; place-items: center; width: 48px; background: #000; }
.search { display: flex; align-items: center; gap: 10px; width: 344px; padding: 0 11px; background: #323232; border: 1px solid #454545; }
.search input { flex: 1; min-width: 0; padding: 0; border: 0; background: none; font: 14px/20px "Noto Sans", sans-serif; color: #d8d8d8; }
.search input::placeholder { color: #d4d4d4; opacity: 1; }
.apps { display: flex; margin-left: 2px; }
.app { display: grid; place-items: center; width: 49px; }
.run { background: linear-gradient(#f0979a, #f0979a) bottom / 40px 2px no-repeat; }
.app-on { background: linear-gradient(#f0979a, #f0979a) bottom / 100% 2px no-repeat #333; }
.tray { display: flex; align-items: center; gap: 8px; margin-left: auto; padding-right: 25px; }
.clock { display: flex; flex-direction: column; align-items: center; font-size: 11px; line-height: 18px; }
.notice { position: relative; margin-left: 6px; }
.badge { position: absolute; left: 8px; top: 8px; width: 16px; height: 16px; border-radius: 50%; background: #333; border: 1px solid #666; line-height: 14px; }
```
